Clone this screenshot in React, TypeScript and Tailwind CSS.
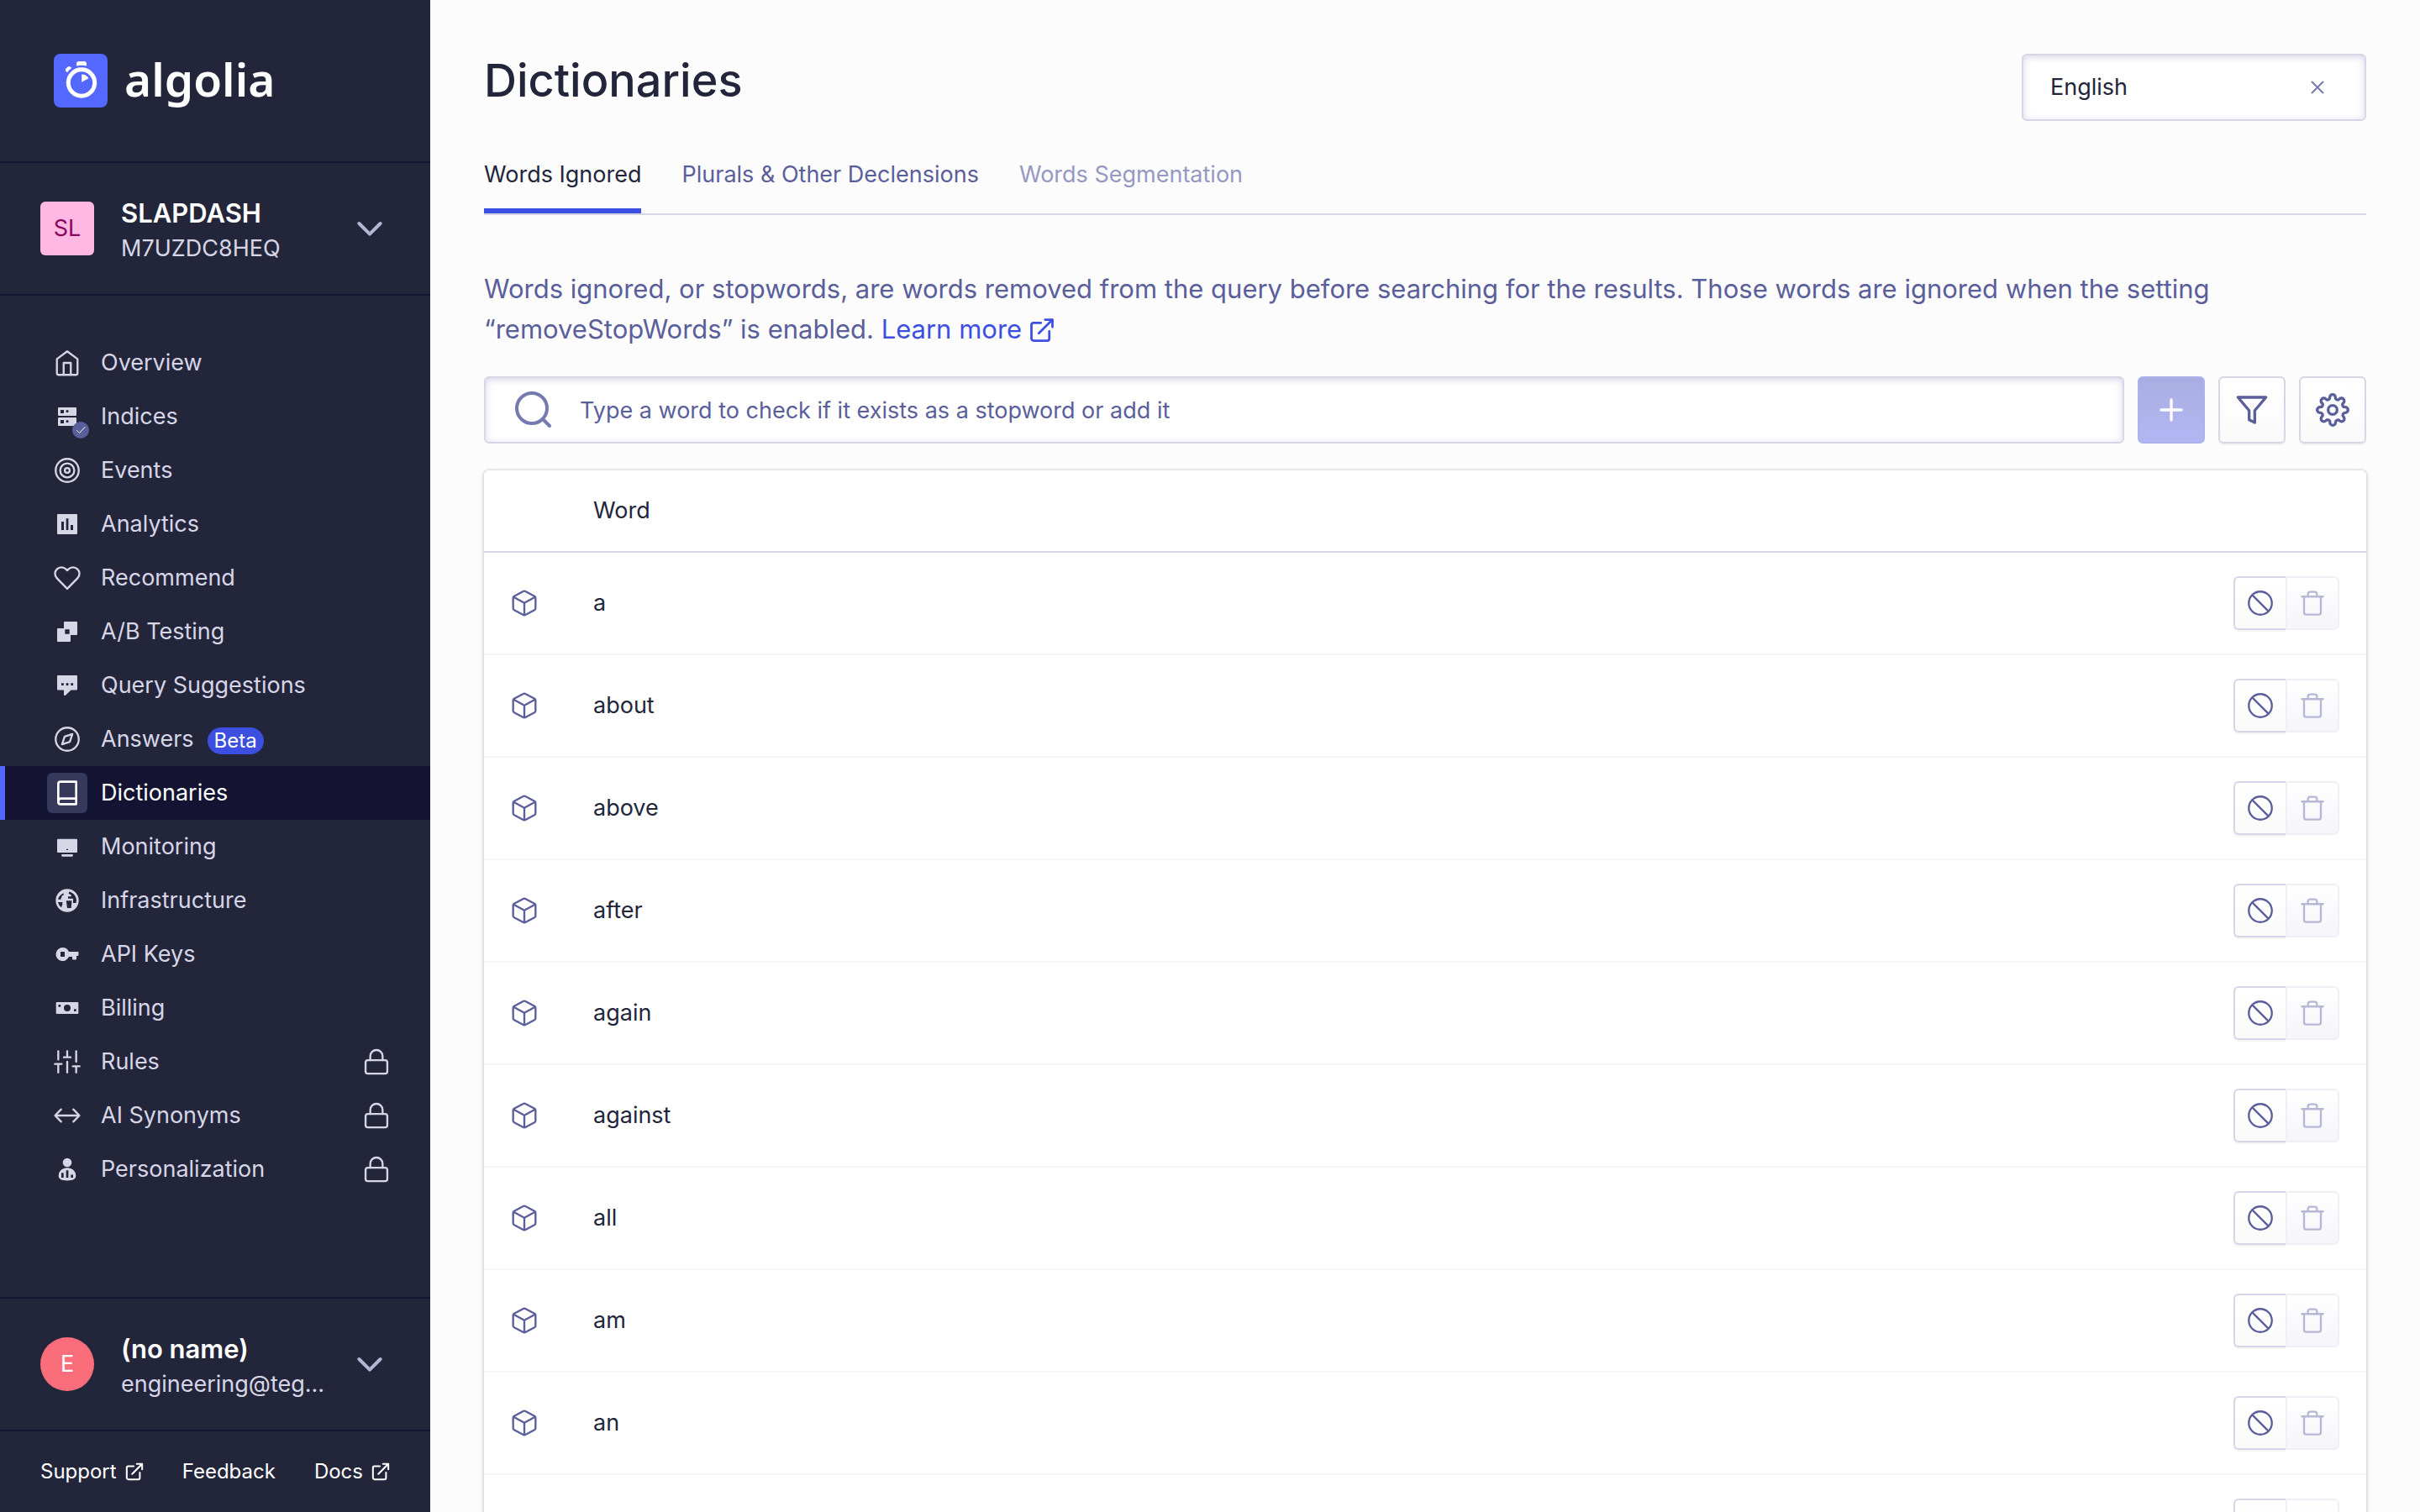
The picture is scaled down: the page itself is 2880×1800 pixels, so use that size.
import React from "react";

type IconProps = { className?: string };

function Line({ children, className = "size-8", width = 2 }: { children: React.ReactNode; className?: string; width?: number }) {
  return (
    <svg viewBox="0 0 24 24" className={className} fill="none" stroke="currentColor" strokeWidth={width} strokeLinecap="round" strokeLinejoin="round" aria-hidden="true">
      {children}
    </svg>
  );
}

function Solid({ children, className = "size-8" }: { children: React.ReactNode; className?: string }) {
  return (
    <svg viewBox="0 0 32 32" className={className} fill="currentColor" fillRule="evenodd" aria-hidden="true">
      {children}
    </svg>
  );
}

const icons = {
  overview: (
    <Line width={1.75}>
      <path d="M2.800 8.500 12 1.700l9.200 6.800v12.700a1.500 1.500 0 0 1-1.500 1.500H4.300a1.500 1.500 0 0 1-1.500-1.500z" />
      <path d="M8.800 22.500V12h6.400v10.500" />
    </Line>
  ),
  indices: (
    <Solid>
      <path d="M6 5h20a1 1 0 0 1 1 1v8a1 1 0 0 1-1 1H6a1 1 0 0 1-1-1V6a1 1 0 0 1 1-1zM8 8v4h4V8zM14.700 8.300v2.700h2.700V8.300z" />
      <path d="M6 17h20a1 1 0 0 1 1 1v8a1 1 0 0 1-1 1H6a1 1 0 0 1-1-1v-8a1 1 0 0 1 1-1zM8 20v4h4v-4zM14.700 20.300v2.700h2.700v-2.700z" />
    </Solid>
  ),
  events: (
    <Line width={1.75}>
      <circle cx="12" cy="12" r="10.300" />
      <circle cx="12" cy="12" r="6.300" />
      <circle cx="12" cy="12" r="2.200" />
    </Line>
  ),
  analytics: (
    <Solid>
      <path d="M5 4h22a1 1 0 0 1 1 1v22a1 1 0 0 1-1 1H5a1 1 0 0 1-1-1V5a1 1 0 0 1 1-1zM9 13v10h3V13zM14.700 9.300V23h2.700V9.300zM20 17v6h3v-6z" />
    </Solid>
  ),
  recommend: (
    <Line width={1.75}>
      <path d="M21.200 4.200a5.700 5.700 0 0 0-8.100 0L12 5.300l-1.100-1.100a5.700 5.700 0 0 0-8.100 8.100l1.100 1.100L12 21.700l8.100-8.300 1.100-1.100a5.700 5.700 0 0 0 0-8.100z" />
    </Line>
  ),
  ab: (
    <Solid>
      <path d="M13 4h14a1 1 0 0 1 1 1v14a1 1 0 0 1-1 1h-7v7a1 1 0 0 1-1 1H5a1 1 0 0 1-1-1V13a1 1 0 0 1 1-1h7V5a1 1 0 0 1 1-1zM13.300 13.300v5.400h5.400v-5.400z" />
    </Solid>
  ),
  query: (
    <Solid>
      <path d="M5 4h22a1 1 0 0 1 1 1v15.500a1 1 0 0 1-1 1h-6.500L14 27.700c-1 .8-2 .3-2-.8v-5.400H5a1 1 0 0 1-1-1V5a1 1 0 0 1 1-1zM9 13.200v2.800h2.800v-2.800zM14.700 13.200v2.800h2.800v-2.800zM20.300 13.200v2.800h2.800v-2.800z" />
    </Solid>
  ),
  answers: (
    <Line width={1.75}>
      <circle cx="12" cy="12" r="10.300" />
      <path d="m16.600 7.400-2.300 6.900-6.900 2.300 2.300-6.900z" />
    </Line>
  ),
  dictionaries: (
    <Line>
      <path d="M4 19.500A2.500 2.500 0 0 1 6 17H20" />
      <path d="M6 2H20v20H6a2 2 0 0 1-2-2V4a2 2 0 0 1 2-2z" />
    </Line>
  ),
  monitoring: (
    <Solid>
      <path d="M5 6.700h22a1 1 0 0 1 1 1v14.300a1 1 0 0 1-1 1H5a1 1 0 0 1-1-1V7.700a1 1 0 0 1 1-1zM15 18.700v1.400h2v-1.400z" />
      <path d="M9.300 25h13.400v1.700a1 1 0 0 1-1 1H10.300a1 1 0 0 1-1-1z" />
    </Solid>
  ),
  infrastructure: (
    <Solid>
      <path d="M16 2.300a13.700 13.700 0 1 1 0 27.400 13.700 13.700 0 0 1 0-27.400zM11.800 7.300C8.500 8.500 5.800 11.300 5 14.700h3.300L9.800 10.300l1.700-.6zM5 18c.6 2.500 2 4.600 4 6.200L10.300 20.500V18zM18.300 5.500 17.700 8l3 1.300v2H17v2.400h6v5.300h3.300c.5-1 .7-2 .7-3 0-5-3.700-9.300-8.700-10.500zM14.800 16.300l1.200 8.700h4.700l.8-8.700z" />
    </Solid>
  ),
  keys: (
    <Solid>
      <path d="M10.500 8a8 8 0 0 1 7.400 5H28.500a1 1 0 0 1 1 1v3a1 1 0 0 1-1 1H27v3.500a1 1 0 0 1-1 1h-3a1 1 0 0 1-1-1V19h-4.100A8 8 0 1 1 10.500 8zM8.700 13a.7.700 0 0 0-.7.700v4.600c0 .4.300.7.700.7h3.600c.4 0 .7-.3.700-.7v-4.600a.7.700 0 0 0-.7-.7z" />
    </Solid>
  ),
  billing: (
    <Solid>
      <path d="M3.700 9h24.600a1 1 0 0 1 1 1v12a1 1 0 0 1-1 1H3.700a1 1 0 0 1-1-1V10a1 1 0 0 1 1-1zM16 12a4 4 0 1 0 0 8 4 4 0 0 0 0-8zM5.500 12v2.700h2.700V12zM24 17.300V20h2.700v-2.700z" />
    </Solid>
  ),
  rules: (
    <Line width={1.75}>
      <path d="M4 21.500v-7.500M4 10V2.500M12 21.500V12M12 8V2.500M20 21.500V16M20 12V2.500M1 14h6M9 8h6M17 16h6" />
    </Line>
  ),
  synonyms: (
    <Line width={1.75}>
      <path d="M1.500 12h21M6.500 6.500 1.200 12l5.300 5.500M17.500 6.500l5.300 5.500-5.300 5.500" />
    </Line>
  ),
  personalization: (
    <Solid>
      <circle cx="16" cy="8" r="5.300" />
      <path d="M16 14.300c5.500 0 10.300 3.700 10.300 9.500 0 3.700-3.500 5.700-10.300 5.700S5.700 27.500 5.700 23.800c0-5.800 4.800-9.500 10.300-9.500zM9 20.300v5.700h2.700v-5.700zM14.700 17.300V26h2.700v-8.700zM20.300 22.500V26H23v-3.500z" />
    </Solid>
  ),
};

function External({ className = "size-6" }: IconProps) {
  return (
    <Line className={className} width={2.2}>
      <path d="M19 13v7a2 2 0 0 1-2 2H4a2 2 0 0 1-2-2V7a2 2 0 0 1 2-2h7M15 2h7v7M9 15 22 2" />
    </Line>
  );
}

function Chevron() {
  return (
    <Line className="size-8 text-[#b6b7d5]" width={3}>
      <path d="m2.500 7.500 9.500 9.500 9.500-9.500" />
    </Line>
  );
}

function Lock() {
  return (
    <Line width={1.75}>
      <rect x="2.300" y="10.600" width="19.400" height="12" rx="2" />
      <path d="M6.500 10.600V7a5.500 5.500 0 0 1 11 0v3.600" />
    </Line>
  );
}

type NavEntry = { label: string; icon: keyof typeof icons; beta?: boolean; locked?: boolean; checked?: boolean; active?: boolean };

const nav: NavEntry[] = [
  { label: "Overview", icon: "overview" },
  { label: "Indices", icon: "indices", checked: true },
  { label: "Events", icon: "events" },
  { label: "Analytics", icon: "analytics" },
  { label: "Recommend", icon: "recommend" },
  { label: "A/B Testing", icon: "ab" },
  { label: "Query Suggestions", icon: "query" },
  { label: "Answers", icon: "answers", beta: true },
  { label: "Dictionaries", icon: "dictionaries", active: true },
  { label: "Monitoring", icon: "monitoring" },
  { label: "Infrastructure", icon: "infrastructure" },
  { label: "API Keys", icon: "keys" },
  { label: "Billing", icon: "billing" },
  { label: "Rules", icon: "rules", locked: true },
  { label: "AI Synonyms", icon: "synonyms", locked: true },
  { label: "Personalization", icon: "personalization", locked: true },
];

const words = ["a", "about", "above", "after", "again", "against", "all", "am", "an", "and"];

function NavItem({ item }: { item: NavEntry }) {
  return (
    <li>
      <a
        href="#"
        aria-current={item.active ? "page" : undefined}
        className={
          item.active
            ? "flex h-16 items-center border-l-6 border-[#5468ff] bg-[#141432] pr-12 pl-[50px] text-white"
            : "flex h-16 items-center pr-12 pl-14 text-[#d6d6e7]"
        }
      >
        <span className={item.active ? "relative mr-4 flex size-12 items-center justify-center rounded-md bg-[#36395a]" : "relative mr-4 flex size-12 items-center justify-center"}>
          {icons[item.icon]}
          {item.checked && (
            <span className="absolute -right-0.5 -bottom-0.5 flex size-5 items-center justify-center rounded-full bg-[#5a5e9a] text-white">
              <Line className="size-3" width={2}>
                <path d="m3 13 6 6L22 5" />
              </Line>
            </span>
          )}
        </span>
        <span>{item.label}</span>
        {item.beta && <span className="mt-1 ml-4 rounded-full bg-[#3c4fe0] px-2 text-2xl leading-8 text-white">Beta</span>}
        {item.locked && (
          <span className="ml-auto">
            <Lock />
          </span>
        )}
      </a>
    </li>
  );
}

function Sidebar() {
  return (
    <aside className="flex w-[512px] shrink-0 flex-col bg-[#23263b] text-[27px] leading-10">
      <a href="#" aria-label="Algolia" className="flex h-48 items-center pl-16 text-white">
        <svg viewBox="0 0 64 64" className="size-16" aria-hidden="true">
          <rect width="64" height="64" rx="8" fill="#5468ff" />
          <circle cx="33" cy="34.500" r="15.700" fill="none" stroke="#fff" strokeWidth="5" />
          <path d="M27 14.500v-2.500a3 3 0 0 1 3-3h6a3 3 0 0 1 3 3v2.500q-6-1.500-12 0z" fill="#fff" />
          <path d="m16 22.500-1.200-1.200a2.800 2.800 0 0 1 0-4l1.400-1.400a2.800 2.800 0 0 1 4 0l1 1q-3.200 2.300-5.200 5.600z" fill="#fff" />
          <path d="M33.200 24.500v9.300l8.300-4.500a9.500 9.500 0 0 0-8.300-4.800z" fill="#fff" />
        </svg>
        <span className="ml-5 pb-1 font-['Noto_Sans',sans-serif] text-[55px] leading-16 font-semibold">algolia</span>
      </a>
      <button type="button" className="flex h-40 items-center border-y-2 border-[#141432] px-12 text-left">
        <span className="flex size-16 items-center justify-center rounded-md bg-[#ffb8e3] text-[#86075d]">SL</span>
        <span className="ml-8 flex flex-1 flex-col pt-1">
          <span className="text-[31px] leading-11 font-semibold text-white">SLAPDASH</span>
          <span className="text-[#d6d6e7]">M7UZDC8HEQ</span>
        </span>
        <span className="mr-2"><Chevron /></span>
      </button>
      <nav className="flex-1 pt-12">
        <ul>
          {nav.map((item) => (
            <NavItem key={item.label} item={item} />
          ))}
        </ul>
      </nav>
      <button type="button" className="flex h-40 items-center border-y-2 border-[#141432] px-12 text-left">
        <span className="flex size-16 items-center justify-center rounded-full bg-[#fa6e7c] text-white">E</span>
        <span className="ml-8 flex flex-1 flex-col pt-1">
          <span className="text-[31px] leading-11 font-semibold text-white">(no name)</span>
          <span className="text-[#d6d6e7]">engineering@teg...</span>
        </span>
        <span className="mr-2"><Chevron /></span>
      </button>
      <div className="flex h-24 items-center justify-between px-12 text-2xl text-white">
        <a href="#" className="flex items-center gap-2.5">Support <External className="size-[22px]" /></a>
        <a href="#">Feedback</a>
        <a href="#" className="flex items-center gap-2.5">Docs <External className="size-[22px]" /></a>
      </div>
    </aside>
  );
}

function WordRow({ word }: { word: string }) {
  return (
    <tr className="h-[122px] border-b-2 border-[#f5f5fa]">
      <td className="pl-8 text-[#5a5e9a]">
        <Line width={1.75}>
          <path d="M22 16.600V7.400a1.800 1.800 0 0 0-.95-1.600l-8.100-4.300a2 2 0 0 0-1.900 0L2.950 5.800A1.800 1.800 0 0 0 2 7.400v9.200a1.800 1.800 0 0 0 .95 1.600l8.100 4.300a2 2 0 0 0 1.900 0l8.100-4.300A1.800 1.800 0 0 0 22 16.600z" />
          <path d="M2.400 6.500 12 11.800l9.600-5.300M12 22.500V11.800" />
        </Line>
      </td>
      <td>{word}</td>
      <td className="pr-8">
        <div className="flex justify-end">
          <button type="button" aria-label={`Disable ${word}`} className="flex h-16 w-[62px] items-center justify-center rounded-l-md border-2 border-r-0 border-[#d6d6e7] bg-linear-to-b from-white to-[#fafafb] text-[#5a5e9a] shadow-[0_2px_0_rgba(35,38,59,0.05)]">
            <Line width={1.75}>
              <circle cx="12" cy="12" r="10.300" />
              <path d="m4.800 4.800 14.400 14.400" />
            </Line>
          </button>
          <button type="button" disabled aria-label={`Delete ${word}`} className="flex size-16 items-center justify-center rounded-r-md border-2 border-[#efeff6] bg-linear-to-b from-white to-[#f5f5fa] text-[#b6b7d5]">
            <Line width={1.75}>
              <path d="M2.500 6.200h19M19.500 6.200v14a2 2 0 0 1-2 2h-11a2 2 0 0 1-2-2v-14M8 6.200V4a2 2 0 0 1 2-2h4a2 2 0 0 1 2 2v2.200" />
            </Line>
          </button>
        </div>
      </td>
    </tr>
  );
}

export default function App() {
  return (
    <div className="flex h-screen overflow-hidden bg-[#fcfcfd] font-['Inter',sans-serif] text-[27px] leading-10 text-[#23263b]">
      <Sidebar />
      <main className="min-w-0 flex-1 px-16 pt-16">
        <header className="flex h-20 items-start justify-between">
          <h1 className="text-[54px] leading-16 font-medium">Dictionaries</h1>
          <div className="flex h-20 w-[410px] items-center justify-between rounded-md border-2 border-[#d6d6e7] bg-white pr-11 pl-8 shadow-[inset_0_2px_8px_rgba(119,122,175,0.3)]">
            <span>English</span>
            <button type="button" aria-label="Clear language" className="text-[#777aaf]">
              <Line className="size-6" width={2}>
                <path d="m5.500 5.500 13 13M18.500 5.500l-13 13" />
              </Line>
            </button>
          </div>
        </header>
        <nav className="mt-10 flex h-[72px] gap-12 border-b-2 border-[#d6d6e7]">
          <a href="#" aria-current="page" className="border-b-6 border-[#3c4fe0] pt-1">Words Ignored</a>
          <a href="#" className="pt-1 text-[#5a5e9a]">Plurals &amp; Other Declensions</a>
          <a aria-disabled="true" className="pt-1 text-[#9698c3]">Words Segmentation</a>
        </nav>
        <p className="mt-16 text-[31px] leading-12 text-[#5a5e9a]">
          Words ignored, or stopwords, are words removed from the query before searching for the results. Those words are ignored when the setting “removeStopWords” is enabled.{" "}
          <a href="#" className="text-[#3c4fe0]">
            Learn more <External className="mb-1 inline size-[30px]" />
          </a>
        </p>
        <div className="mt-8 flex gap-4">
          <label className="flex h-20 flex-1 items-center rounded-md border-2 border-[#d6d6e7] bg-white pl-8 text-[#777aaf] shadow-[inset_0_2px_8px_rgba(119,122,175,0.3)]">
            <Line className="size-12" width={2}>
              <circle cx="11.500" cy="11" r="9" />
              <path d="m18 17.500 4 4" />
            </Line>
            <input type="text" aria-label="Search stopwords" placeholder="Type a word to check if it exists as a stopword or add it" className="ml-8 h-full flex-1 outline-none placeholder:text-[#5a5e9a]" />
          </label>
          <button type="button" aria-label="Add word" className="flex size-20 items-center justify-center rounded-md border-2 border-[#adb3ea] bg-linear-to-b from-[#a9aee2] to-[#b1b7f3] text-white">
            <Line width={2.5}>
              <path d="M12 3v18M3 12h18" />
            </Line>
          </button>
          <button type="button" aria-label="Filter" className="flex size-20 items-center justify-center rounded-md border-2 border-[#d6d6e7] bg-linear-to-b from-white to-[#fafafb] text-[#5a5e9a] shadow-[0_2px_0_rgba(35,38,59,0.05)]">
            <Line className="size-10" width={2}>
              <path d="M22 3H2l8 9.460V19l4 2v-8.540z" />
            </Line>
          </button>
          <button type="button" aria-label="Settings" className="flex size-20 items-center justify-center rounded-md border-2 border-[#d6d6e7] bg-linear-to-b from-white to-[#fafafb] text-[#5a5e9a] shadow-[0_2px_0_rgba(35,38,59,0.05)]">
            <Line className="size-10" width={2}>
              <circle cx="12" cy="12" r="3.200" />
              <path d="M19.400 15a1.650 1.650 0 0 0 .33 1.820l.06.060a2 2 0 1 1-2.830 2.830l-.06-.06a1.650 1.650 0 0 0-2.800 1.170V21a2 2 0 0 1-4 0v-.09a1.650 1.650 0 0 0-2.900-1.260l-.06.060a2 2 0 1 1-2.830-2.830l.06-.06A1.650 1.650 0 0 0 3.090 14H3a2 2 0 0 1 0-4h.09a1.650 1.650 0 0 0 1.260-2.900l-.06-.06a2 2 0 1 1 2.830-2.830l.06.060A1.650 1.650 0 0 0 10 3.090V3a2 2 0 0 1 4 0v.09a1.650 1.650 0 0 0 2.820 1.180l.06-.06a2 2 0 1 1 2.830 2.830l-.06.060A1.650 1.650 0 0 0 20.910 10H21a2 2 0 0 1 0 4h-.09a1.650 1.650 0 0 0-1.510 1z" />
            </Line>
          </button>
        </div>
        <div className="mt-8 overflow-hidden rounded-md bg-white shadow-[0_0_0_2px_rgba(35,38,59,0.08),0_2px_6px_rgba(35,38,59,0.12)]">
          <table className="w-full table-fixed border-collapse text-left">
            <colgroup>
              <col className="w-[130px]" />
              <col />
              <col className="w-[190px]" />
            </colgroup>
            <thead>
              <tr className="h-[97px] border-b-2 border-[#d6d6e7]">
                <th aria-label="Type" />
                <th scope="col" className="font-normal">Word</th>
                <th aria-label="Actions" />
              </tr>
            </thead>
            <tbody>
              {words.map((word) => (
                <WordRow key={word} word={word} />
              ))}
            </tbody>
          </table>
        </div>
      </main>
    </div>
  );
}
